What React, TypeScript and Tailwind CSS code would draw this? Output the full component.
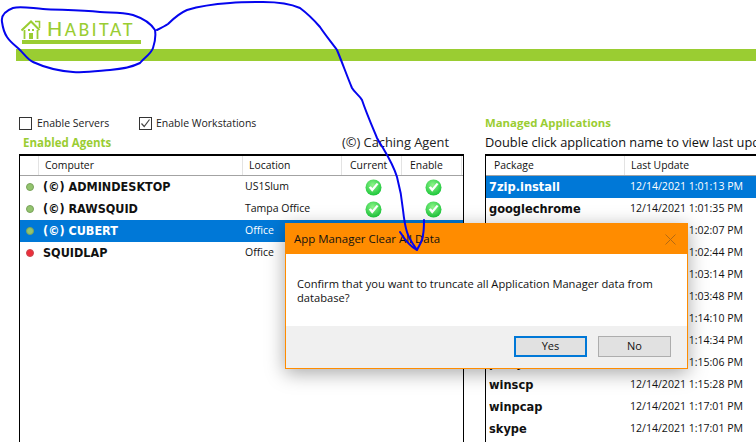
import React from 'react';

const agents = [
  { name: '(©) ADMINDESKTOP', location: 'US1Slum', dot: 'green', checks: true },
  { name: '(©) RAWSQUID', location: 'Tampa Office', dot: 'green', checks: true },
  { name: '(©) CUBERT', location: 'Office', dot: 'green', checks: false, selected: true },
  { name: 'SQUIDLAP', location: 'Office', dot: 'red', checks: false },
];

const apps = [
  { name: '7zip.install', time: '12/14/2021 1:01:13 PM', selected: true },
  { name: 'googlechrome', time: '12/14/2021 1:01:35 PM' },
  { name: 'notepadplusplus', time: '12/14/2021 1:02:07 PM' },
  { name: 'adobereader', time: '12/14/2021 1:02:44 PM' },
  { name: 'firefox', time: '12/14/2021 1:03:14 PM' },
  { name: 'jre8', time: '12/14/2021 1:03:48 PM' },
  { name: 'vlc', time: '12/14/2021 1:14:10 PM' },
  { name: 'filezilla', time: '12/14/2021 1:14:34 PM' },
  { name: 'putty', time: '12/14/2021 1:15:06 PM' },
  { name: 'winscp', time: '12/14/2021 1:15:28 PM' },
  { name: 'winpcap', time: '12/14/2021 1:17:01 PM' },
  { name: 'skype', time: '12/14/2021 1:17:01 PM' },
];

function GreenCheck() {
  return (
    <svg width="17" height="17" viewBox="0 0 17 17">
      <defs>
        <radialGradient id="okFill" cx="45%" cy="35%" r="65%">
          <stop offset="0%" stopColor="#8ff58a" />
          <stop offset="100%" stopColor="#1cc63a" />
        </radialGradient>
      </defs>
      <circle cx="8.5" cy="8.5" r="8" fill="url(#okFill)" />
      <path d="M3.8 8.6 L7.2 12.8 L13.6 5 L11.6 4 L7.4 9 L5.8 7.2 Z" fill="#fff" />
    </svg>
  );
}

function StatusDot({ color }: { color: string }) {
  return (
    <span
      className={
        color === 'red'
          ? 'block h-2 w-2 rounded-full border border-[#c9474f] bg-[#ec2f3b]'
          : 'block h-2 w-2 rounded-full border border-[#7aa35c] bg-[#93c46e]'
      }
    />
  );
}

function Checkbox({ checked }: { checked?: boolean }) {
  return (
    <span className="flex h-[13px] w-[13px] shrink-0 items-center justify-center border border-[#333]">
      {checked && (
        <svg width="11" height="11" viewBox="0 0 11 11">
          <path d="M1.5 5.5 L4.2 8.5 L9.5 1.5" fill="none" stroke="#444" strokeWidth="1.2" />
        </svg>
      )}
    </span>
  );
}

function HabitatLogo() {
  return (
    <div className="flex flex-col">
      <div className="flex h-[19px] items-end">
        <svg width="20" height="19" viewBox="0 0 20 19" className="shrink-0">
          <path d="M0.5 10.5 L10 1.5 L18.5 10" fill="none" stroke="#9acd32" strokeWidth="2" />
          <path d="M14 1.5 H18.5 V8" fill="none" stroke="#9acd32" strokeWidth="1.6" />
          <path d="M3.5 10 V19 M16.5 10 V19" stroke="#9acd32" strokeWidth="1.8" />
          <path d="M7 9 h2 v2 h-2 Z M11 9 h2 v2 h-2 Z M8 13 h4 v6 h-4 Z" fill="#9acd32" />
        </svg>
        <span className="ml-[6px] font-['Lato',sans-serif] text-[20px] font-medium leading-[18px] tracking-[2.5px] text-[#9acd32]">
          H<span className="text-[16.5px]">ABITAT</span>
        </span>
      </div>
      <div className="ml-px mt-px h-[4px] w-[119px] bg-[#9acd32]" />
    </div>
  );
}

function HeaderCell({ className, children }: { className: string; children?: React.ReactNode }) {
  return (
    <div className={`flex h-full items-center border-r border-[#e3e3e3] ${className}`}>{children}</div>
  );
}

function AgentsTable() {
  return (
    <div className="h-[300px] w-[445px] border-x border-t-2 border-black font-['Open_Sans',sans-serif] text-[10.4px] text-[#111]">
      <div className="flex h-[20px] border-b border-[#a3a3a3]">
        <HeaderCell className="w-[19px]" />
        <HeaderCell className="w-[204px] pl-[6px]">Computer</HeaderCell>
        <HeaderCell className="w-[99px] pl-[6px]">Location</HeaderCell>
        <HeaderCell className="w-[60px] pl-[8px]">Current</HeaderCell>
        <HeaderCell className="w-[60px] pl-[8px]">Enable</HeaderCell>
      </div>
      {agents.map((a) => (
        <div
          key={a.name}
          className={
            a.selected
              ? 'flex h-[22px] items-center bg-[#0078d7] text-white'
              : 'flex h-[22px] items-center bg-white'
          }
        >
          <div className="w-[23px] pl-[6px]">
            <StatusDot color={a.dot} />
          </div>
          <div className="w-[200px] font-['DejaVu_Sans_Condensed','DejaVu_Sans',sans-serif] text-[12.5px] font-bold">
            {a.name}
          </div>
          <div className="w-[100px] pl-[2px] text-[10.5px]">{a.location}</div>
          <div className="flex w-[60px] justify-center">{a.checks && <GreenCheck />}</div>
          <div className="flex w-[60px] justify-center">{a.checks && <GreenCheck />}</div>
        </div>
      ))}
    </div>
  );
}

function AppsTable() {
  return (
    <div className="h-[300px] w-[300px] border-l border-t-2 border-black font-['Open_Sans',sans-serif] text-[10.4px] text-[#111]">
      <div className="flex h-[20px] border-b border-[#a3a3a3]">
        <HeaderCell className="w-[139px] pl-[8px]">Package</HeaderCell>
        <HeaderCell className="flex-1 pl-[6px]">Last Update</HeaderCell>
      </div>
      {apps.map((a) => (
        <div
          key={a.name}
          className={
            a.selected
              ? 'flex h-[22px] items-center bg-[#0078d7] text-white'
              : 'flex h-[22px] items-center bg-white'
          }
        >
          <div className="w-[144px] pl-[3px] font-['DejaVu_Sans_Condensed','DejaVu_Sans',sans-serif] text-[12.7px] font-bold">
            {a.name}
          </div>
          <div className="whitespace-nowrap text-[10.55px]">{a.time}</div>
        </div>
      ))}
    </div>
  );
}

function ConfirmDialog() {
  return (
    <div className="absolute left-[285px] top-[223px] flex h-[146px] w-[403px] flex-col border border-[#ff8c00] bg-white font-['Open_Sans',sans-serif] text-[#111] shadow-[0_4px_18px_rgba(0,0,0,0.35)]">
      <div className="flex h-[30px] items-center justify-between bg-[#ff8c00] pl-[8px] pr-[11px] text-[11.45px]">
        <span>App Manager Clear All Data</span>
        <svg width="11" height="11" viewBox="0 0 11 11">
          <path d="M0.5 0.5 L10.5 10.5 M10.5 0.5 L0.5 10.5" stroke="#b56a12" strokeWidth="1" />
        </svg>
      </div>
      <div className="h-[72px] whitespace-nowrap px-[11px] pt-[23px] text-[11.15px] leading-[14px]">
        Confirm that you want to truncate all Application Manager data from
        <br />
        database?
      </div>
      <div className="flex flex-1 items-start justify-end gap-[11px] bg-[#f0f0f0] pr-[16px] pt-[10px] text-[11px]">
        <button className="h-[21px] w-[73px] border-2 border-[#0078d7] bg-[#e1e1e1]">Yes</button>
        <button className="h-[21px] w-[73px] border border-[#adadad] bg-[#e1e1e1]">No</button>
      </div>
    </div>
  );
}

function Scribble() {
  return (
    <svg className="absolute left-0 top-0" width="756" height="442" viewBox="0 0 756 442" fill="none">
      <path
        d="M155 30 C150 22 142 18 133 15 C120 12 110 13 100 12 C80 10 60 10 43 9 C30 8 20 6 13 8 C5 11 1 16 2 22 C3 29 5 34 7 37 C11 43 16 46 20 50 C25 55 28 60 33 62 C46 68 60 71 73 72 C86 73 98 71 110 70 C122 69 132 67 140 63 C144 58 151 54 153 48 C155 42 156 36 155 30 Z"
        stroke="#0505ee"
        strokeWidth="2"
      />
      <path
        d="M157 30 C161 28 165 26 168 24 C173 19 180 13 187 10 C200 6 215 4 230 3 C242 2 252 2 263 2 C278 2 291 4 300 8 C308 14 314 20 320 27 C326 36 332 43 337 50 C342 62 347 76 352 88 C355 93 360 96 362 100 C366 112 372 126 377 138 C379 142 381 145 383 148 C389 158 394 167 397 177 C400 188 402 199 403 210 C404 219 405 226 407 232 C409 239 413 244 417 250 C420 244 423 240 423 235 C424 230 424 225 424 220 M417 250 C411 247 405 240 400 232"
        stroke="#0505ee"
        strokeWidth="2"
        strokeLinecap="round"
        strokeLinejoin="round"
      />
    </svg>
  );
}

export default function App() {
  return (
    <div className="relative h-[442px] w-[756px] overflow-hidden bg-white">
      <div className="h-[49px] pl-[21px] pt-[20px]">
        <HabitatLogo />
      </div>
      <div className="ml-4 h-3 bg-[#9acd32]" />

      <div className="flex pl-[19px] pt-[56px]">
        <div className="w-[445px] shrink-0">
          <div className="flex h-[13px] items-center font-['Open_Sans',sans-serif] text-[10.5px] text-[#222]">
            <Checkbox />
            <span className="ml-[5px] w-[102px]">Enable Servers</span>
            <Checkbox checked />
            <span className="ml-[4px]">Enable Workstations</span>
          </div>
          <div className="flex h-[24px] items-center justify-between pr-[15px] pl-[4px] pt-[2px]">
            <span className="font-['Open_Sans',sans-serif] text-[11.5px] font-bold text-[#9acd32]">Enabled Agents</span>
            <span className="font-['Open_Sans',sans-serif] text-[12.85px] text-[#222]">(©) Caching Agent</span>
          </div>
          <AgentsTable />
        </div>

        <div className="ml-[21px] w-[300px] shrink-0">
          <div className="flex h-[12px] items-center font-['Open_Sans',sans-serif] text-[11.4px] font-bold text-[#9acd32]">
            Managed Applications
          </div>
          <div className="flex h-[25px] items-center whitespace-nowrap pt-[3px] font-['Open_Sans',sans-serif] text-[12.8px] text-[#111]">
            Double click application name to view last update
          </div>
          <AppsTable />
        </div>
      </div>

      <ConfirmDialog />
      <Scribble />
    </div>
  );
}
